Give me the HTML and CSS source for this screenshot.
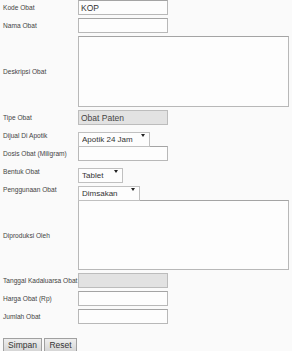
FILE: index.html
```html
<!DOCTYPE html>
<html>
<head>
<meta charset="utf-8">
<link rel="stylesheet" href="styles.css">
</head>
<body>
<form class="form">
  <div class="grid">
    <label class="lbl">Kode Obat</label>
    <input class="field" type="text" value="KOP">
    <label class="lbl">Nama Obat</label>
    <input class="field" type="text">
    <label class="lbl">Deskripsi Obat</label>
    <textarea class="area area-1"></textarea>
    <label class="lbl">Tipe Obat</label>
    <input class="field disabled" type="text" value="Obat Paten" disabled>
    <label class="lbl">Dijual Di Apotik</label>
    <span class="sel sel-apotik"><select><option>Apotik 24 Jam</option></select></span>
    <label class="lbl">Dosis Obat (Miligram)</label>
    <input class="field" type="text">
    <label class="lbl">Bentuk Obat</label>
    <span class="sel sel-bentuk"><select><option>Tablet</option></select></span>
    <label class="lbl">Penggunaan Obat</label>
    <span class="sel sel-guna"><select><option>Dimsakan</option></select></span>
    <label class="lbl">Diproduksi Oleh</label>
    <textarea class="area area-2"></textarea>
    <label class="lbl">Tanggal Kadaluarsa Obat</label>
    <input class="field disabled" type="text" disabled>
    <label class="lbl">Harga Obat (Rp)</label>
    <input class="field" type="text">
    <label class="lbl">Jumlah Obat</label>
    <input class="field" type="text">
  </div>
  <div class="actions">
    <button type="button" class="btn btn-save">Simpan</button>
    <button type="button" class="btn btn-reset">Reset</button>
  </div>
</form>
</body>
</html>
```

FILE: styles.css
```css
html, body {
  margin: 0;
  padding: 0;
  background: #fafafa;
}
body {
  font-family: "Liberation Sans", Arial, sans-serif;
  color: #333;
}
.form {
  padding: 0 0 0 3px;
}
.grid {
  display: grid;
  grid-template-columns: 75px auto;
  row-gap: 3px;
  justify-items: start;
}
.lbl {
  font-size: 6.6px;
  color: #444;
  align-self: center;
  white-space: nowrap;
}
.field {
  box-sizing: border-box;
  width: 90px;
  height: 15px;
  margin: 0;
  padding: 0 2px;
  border: 1px solid #b8b8b8;
  border-top-color: #a4a4a4;
  background: #fdfdfd;
  font-family: "Liberation Sans", Arial, sans-serif;
  font-size: 8.5px;
  color: #333;
  outline: none;
}
.field.disabled {
  background: #e2e2e2;
  border-color: #bcbcbc;
  color: #444;
}
.area {
  box-sizing: border-box;
  width: 211px;
  margin: 0;
  padding: 2px;
  border: 1px solid #b8b8b8;
  border-top-color: #a4a4a4;
  background: #fdfdfd;
  resize: none;
  display: block;
}
.area-1 { height: 71px; }
.area-2 { height: 70px; }
.sel {
  position: relative;
  display: block;
  height: 15px;
}
.sel select {
  -webkit-appearance: none;
  appearance: none;
  box-sizing: border-box;
  height: 15px;
  width: 100%;
  margin: 0;
  padding: 0 0 0 3px;
  border: 1px solid #c0c0c0;
  background: #fdfdfd;
  font-family: "Liberation Sans", Arial, sans-serif;
  font-size: 8px;
  color: #333;
  outline: none;
}
.sel::after {
  content: "";
  position: absolute;
  right: 5px;
  top: 6px;
  border-left: 2.5px solid transparent;
  border-right: 2.5px solid transparent;
  border-top: 3px solid #222;
  pointer-events: none;
}
.sel-apotik { width: 72px; }
.sel-bentuk { width: 45px; }
.sel-guna { width: 62px; }
.actions {
  display: flex;
  gap: 2px;
  margin-top: 14px;
}
.btn {
  box-sizing: border-box;
  height: 14px;
  margin: 0;
  padding: 0;
  border: 1px solid #a0a0a0;
  background: linear-gradient(#eeeeee, #d6d6d6);
  font-family: "Liberation Sans", Arial, sans-serif;
  font-size: 8.5px;
  color: #333;
}
.btn-save { width: 39px; }
.btn-reset { width: 33px; }
```
